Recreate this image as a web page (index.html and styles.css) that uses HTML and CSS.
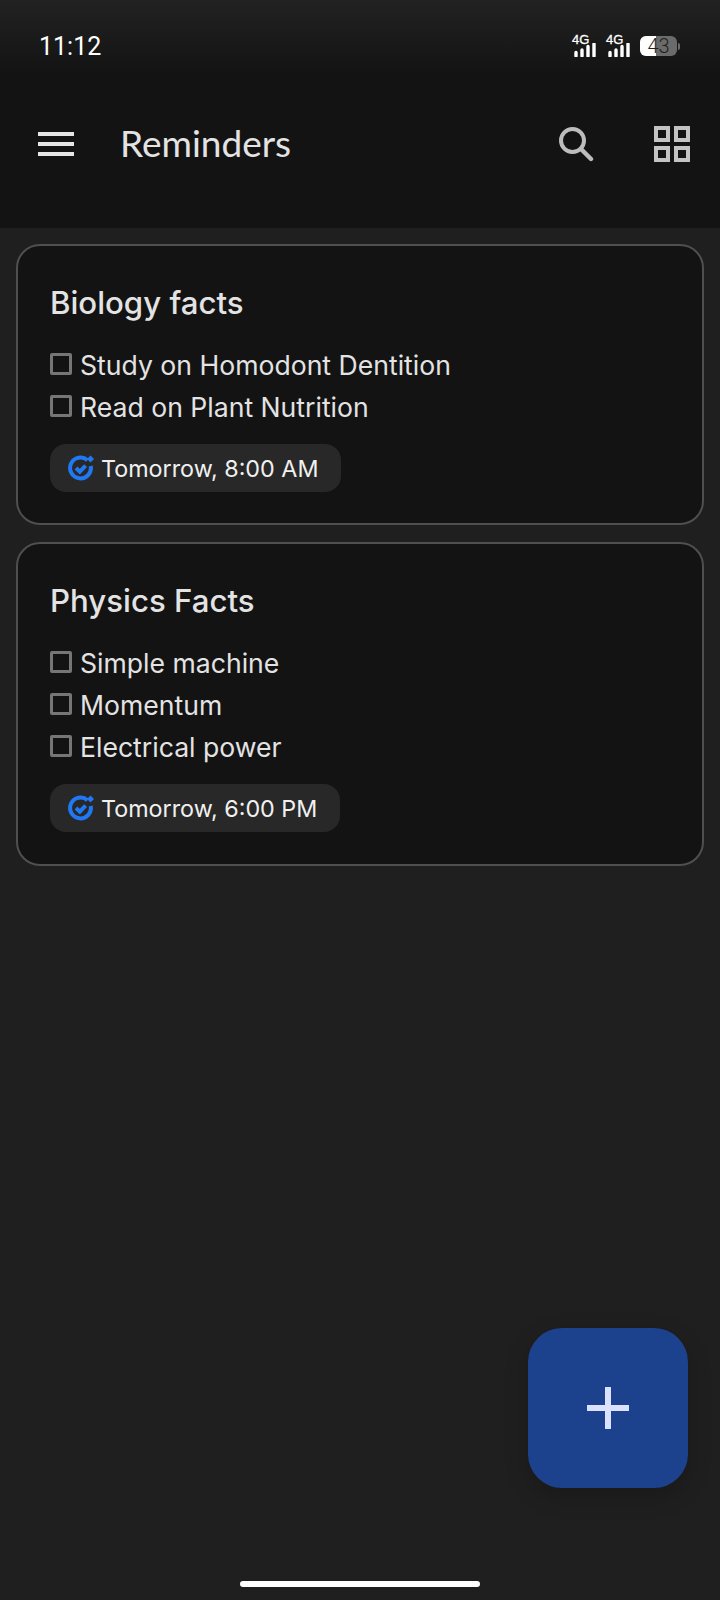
FILE: index.html
```html
<!DOCTYPE html>
<html lang="en">
<head>
    <meta charset="UTF-8">
    <meta name="viewport" content="width=device-width, initial-scale=1.0">
    <title>Reminders</title>
    <link rel="stylesheet" href="styles.css">
</head>
<body>
    <header class="topbar">
        <!-- Status bar -->
        <div class="status">
            <span class="clock">11:12</span>
            <div class="status-icons">
                <span class="net">
                    <span class="net-label">4G</span>
                    <svg class="net-bars" width="22" height="14" viewBox="0 0 22 14"><path d="M2 9.5V13M8 7V13M14 3.5V13M20 1V13" stroke="#fff" stroke-width="3.4" stroke-linecap="round" fill="none"/></svg>
                </span>
                <span class="net">
                    <span class="net-label">4G</span>
                    <svg class="net-bars" width="22" height="14" viewBox="0 0 22 14"><path d="M2 9.5V13M8 7V13M14 3.5V13M20 1V13" stroke="#fff" stroke-width="3.4" stroke-linecap="round" fill="none"/></svg>
                </span>
                <div class="battery">
                    <div class="battery-body">
                        <div class="battery-fill"></div>
                        <span class="battery-num">43</span>
                    </div>
                    <div class="battery-tip"></div>
                </div>
            </div>
        </div>

        <!-- App bar -->
        <div class="appbar">
            <svg class="menu-icon" width="36" height="24" viewBox="0 0 36 24"><path d="M0 0H36V4H0ZM0 10H36V14H0ZM0 20H36V24H0Z" fill="#e6e6e6"/></svg>
            <h1 class="appbar-title">Reminders</h1>
            <svg class="search-icon" width="36" height="36" viewBox="0 0 36 36"><circle cx="14.5" cy="14.5" r="11.5" stroke="#bdbdbd" stroke-width="4" fill="none"/><path d="M23 23L33 33" stroke="#bdbdbd" stroke-width="4.4" stroke-linecap="round"/></svg>
            <svg class="grid-icon" width="36" height="36" viewBox="0 0 36 36"><path d="M2 2H14V14H2ZM22 2H34V14H22ZM2 22H14V34H2ZM22 22H34V34H22Z" stroke="#c4c4c4" stroke-width="4" fill="none"/></svg>
        </div>
    </header>

    <main class="lista">
        <section class="card">
            <h2 class="card-title">Biology facts</h2>
            <ul class="items">
                <li class="item"><span class="check"></span>Study on Homodont Dentition</li>
                <li class="item"><span class="check"></span>Read on Plant Nutrition</li>
            </ul>
            <div class="chip">
                <svg class="chip-icon" width="27" height="26" viewBox="0 0 27 26"><path d="M19.5 5.3A10.4 10.4 0 1 0 22.7 11" stroke="#2079f3" stroke-width="4" fill="none"/><path d="M8 13L11.8 16.6L17.6 10.6" stroke="#2079f3" stroke-width="4" fill="none"/><path d="M22.5 0.5L26 4L22.5 7.5L19 4Z" fill="#2079f3"/></svg>
                <span>Tomorrow, 8:00 AM</span>
            </div>
        </section>

        <section class="card card-long">
            <h2 class="card-title">Physics Facts</h2>
            <ul class="items">
                <li class="item"><span class="check"></span>Simple machine</li>
                <li class="item"><span class="check"></span>Momentum</li>
                <li class="item"><span class="check"></span>Electrical power</li>
            </ul>
            <div class="chip">
                <svg class="chip-icon" width="27" height="26" viewBox="0 0 27 26"><path d="M19.5 5.3A10.4 10.4 0 1 0 22.7 11" stroke="#2079f3" stroke-width="4" fill="none"/><path d="M8 13L11.8 16.6L17.6 10.6" stroke="#2079f3" stroke-width="4" fill="none"/><path d="M22.5 0.5L26 4L22.5 7.5L19 4Z" fill="#2079f3"/></svg>
                <span>Tomorrow, 6:00 PM</span>
            </div>
        </section>
    </main>

    <!-- Floating button -->
    <button class="fab">
        <svg width="42" height="42" viewBox="0 0 42 42"><path d="M18 0H24V18H42V24H24V42H18V24H0V18H18Z" fill="#dbe1ff"/></svg>
    </button>

    <div class="home-bar"></div>
</body>
</html>
```

FILE: styles.css
```css
/* Dark reminders screen */
body {
    margin: 0;
    height: 1600px;
    overflow: hidden;
    position: relative;
    background-color: #1f1f1f;
    font-family: Inter, "Noto Sans", sans-serif;
    color: #e3e3e3;
}

.topbar {
    height: 228px;
    background: linear-gradient(#222222 0, #131313 75px);
}

.status {
    height: 92px;
    box-sizing: border-box;
    padding: 34px 40px 0 39px;
    display: flex;
    justify-content: space-between;
    align-items: flex-start;
}
.clock {
    font-family: Roboto, sans-serif;
    font-size: 25px;
    line-height: 26px;
    color: #fff;
}
.status-icons {
    display: flex;
    align-items: flex-start;
    gap: 10px;
    margin-top: -1px;
}
.net {
    width: 24px;
    height: 24px;
    position: relative;
    display: block;
}
.net-label {
    position: absolute;
    left: 0;
    top: 1px;
    font-family: "Liberation Sans", sans-serif;
    font-size: 13px;
    line-height: 12px;
    color: #fff;
    -webkit-text-stroke: 0.3px #fff;
}
.net-bars {
    position: absolute;
    left: 2px;
    top: 10px;
}
.battery {
    display: flex;
    align-items: center;
    margin-top: 3px;
}
.battery-body {
    width: 37px;
    height: 20px;
    position: relative;
    border-radius: 6px;
    background-color: #6b6b6b;
}
.battery-fill {
    width: 16px;
    height: 20px;
    border-radius: 6px 0 0 6px;
    background-color: #fff;
}
.battery-num {
    position: absolute;
    left: 0;
    right: 0;
    top: 0;
    text-align: center;
    font-family: Roboto, sans-serif;
    font-size: 20px;
    font-weight: 300;
    line-height: 20px;
    color: #222;
}
.battery-tip {
    width: 2px;
    height: 7px;
    margin-left: 1px;
    border-radius: 0 2px 2px 0;
    background-color: #6b6b6b;
}

.appbar {
    display: flex;
    align-items: center;
    height: 104px;
    padding: 0 30px 0 38px;
}
.appbar-title {
    flex: 1;
    margin: -4px 0 0 46px;
    font-family: Lato, sans-serif;
    font-size: 37px;
    font-weight: 400;
    color: #e3e3e3;
}
.search-icon {
    margin-right: 60px;
}

.lista {
    display: flex;
    flex-direction: column;
    gap: 17px;
    padding: 16px 16px 0;
}
.card {
    box-sizing: border-box;
    border: 2px solid #4f4f4f;
    border-radius: 24px;
    background-color: #131313;
    padding: 37px 32px 31px;
}
.card-long {
    padding-bottom: 32px;
}
.card-title {
    margin: 0 0 21px;
    font-size: 31.2px;
    line-height: 40px;
    font-weight: 500;
    color: #e3e3e3;
}
.items {
    list-style: none;
    margin: 0 0 16px;
    padding: 0;
}
.item {
    display: flex;
    align-items: center;
    gap: 8px;
    height: 42px;
    font-size: 26.6px;
    color: #e3e3e3;
}
.check {
    box-sizing: border-box;
    width: 22px;
    height: 22px;
    margin-top: -2px;
    border: 3px solid #767676;
    border-radius: 2px;
}
.chip {
    display: inline-flex;
    align-items: center;
    gap: 6px;
    height: 48px;
    padding: 0 23px 0 18px;
    border-radius: 16px;
    background-color: #282828;
    font-size: 23.3px;
    color: #f0f0f0;
}

.fab {
    position: absolute;
    left: 528px;
    top: 1328px;
    width: 160px;
    height: 160px;
    padding: 0;
    border: none;
    border-radius: 34px;
    background-color: #1d428d;
    box-shadow: 0 8px 24px rgba(0, 0, 0, 0.2);
    display: flex;
    align-items: center;
    justify-content: center;
}

.home-bar {
    position: absolute;
    left: 240px;
    top: 1581px;
    width: 240px;
    height: 6px;
    border-radius: 3px;
    background-color: #fff;
}
```
